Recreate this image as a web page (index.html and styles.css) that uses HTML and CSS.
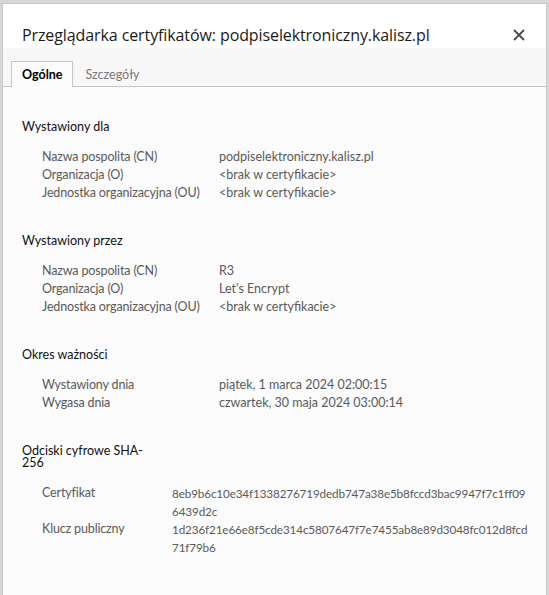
FILE: index.html
```html
<!DOCTYPE html>
<html lang="pl">
<head>
    <meta charset="UTF-8">
    <title>Przeglądarka certyfikatów</title>
    <link rel="stylesheet" href="styles.css">
</head>
<body>
    <div class="dialog">
        <div class="dialog-header">
            <h1 class="dialog-title">Przeglądarka certyfikatów: podpiselektroniczny.kalisz.pl</h1>
            <button class="close-btn" aria-label="Zamknij">
                <svg width="12" height="12" viewBox="0 0 12 12">
                    <path d="M1 1 L11 11 M11 1 L1 11" stroke="#4a4a4a" stroke-width="1.8" fill="none"/>
                </svg>
            </button>
        </div>
        <div class="tabs">
            <div class="tab active">Ogólne</div>
            <div class="tab">Szczegóły</div>
        </div>
        <div class="content">
            <div class="section">
                <div class="section-title">Wystawiony dla</div>
                <div class="fields">
                    <div class="label">Nazwa pospolita (CN)</div>
                    <div class="value">podpiselektroniczny.kalisz.pl</div>
                    <div class="label">Organizacja (O)</div>
                    <div class="value">&lt;brak w certyfikacie&gt;</div>
                    <div class="label">Jednostka organizacyjna (OU)</div>
                    <div class="value">&lt;brak w certyfikacie&gt;</div>
                </div>
            </div>
            <div class="section">
                <div class="section-title">Wystawiony przez</div>
                <div class="fields">
                    <div class="label">Nazwa pospolita (CN)</div>
                    <div class="value">R3</div>
                    <div class="label">Organizacja (O)</div>
                    <div class="value">Let's Encrypt</div>
                    <div class="label">Jednostka organizacyjna (OU)</div>
                    <div class="value">&lt;brak w certyfikacie&gt;</div>
                </div>
            </div>
            <div class="section">
                <div class="section-title">Okres ważności</div>
                <div class="fields">
                    <div class="label">Wystawiony dnia</div>
                    <div class="value">piątek, 1 marca 2024 02:00:15</div>
                    <div class="label">Wygasa dnia</div>
                    <div class="value">czwartek, 30 maja 2024 03:00:14</div>
                </div>
            </div>
            <div class="section">
                <div class="section-title">Odciski cyfrowe SHA-256</div>
                <div class="fields fingerprints">
                    <div class="label">Certyfikat</div>
                    <div class="value hash">8eb9b6c10e34f1338276719dedb747a38e5b8fccd3bac9947f7c1ff096439d2c</div>
                    <div class="label">Klucz publiczny</div>
                    <div class="value hash">1d236f21e66e8f5cde314c5807647f7e7455ab8e89d3048fc012d8fcd71f79b6</div>
                </div>
            </div>
        </div>
    </div>
</body>
</html>
```

FILE: styles.css
```css
* {
    box-sizing: border-box;
    margin: 0;
    padding: 0;
}

body {
    background: #d4d6d8;
    font-family: Lato, 'Open Sans', sans-serif;
    height: 595px;
    overflow: hidden;
    padding: 3px 2px 0 2px;
}

.dialog {
    width: 545px;
    height: 600px;
    background: #fbfbfb;
    border: 1px solid #c9c9c9;
    border-bottom: none;
}

.dialog-header {
    background: #fff;
    height: 44px;
    display: flex;
    align-items: center;
    justify-content: space-between;
    padding: 17px 20px 0 19px;
}

.dialog-title {
    font-family: 'Open Sans', sans-serif;
    font-size: 16px;
    font-weight: 400;
    color: #1a1a1a;
    letter-spacing: -0.1px;
}

.close-btn {
    background: none;
    border: none;
    width: 14px;
    height: 14px;
    display: flex;
    align-items: center;
    justify-content: center;
}

.tabs {
    background: #f7f7f7;
    height: 39px;
    display: flex;
    align-items: flex-end;
    padding-left: 8px;
    border-bottom: 1px solid #c6c6c6;
}

.tab {
    font-size: 12.5px;
    color: #777;
    height: 26px;
    padding: 0 11px;
    line-height: 25px;
    margin-bottom: -1px;
    border: 1px solid transparent;
    border-bottom: none;
}

.tab.active {
    color: #000;
    font-weight: 700;
    background: #fbfbfb;
    border-color: #c6c6c6;
    padding: 0 10px;
}

.content {
    padding: 34px 10px 0 19px;
    font-size: 12.5px;
}

.section {
    margin-bottom: 33px;
}

.section-title {
    color: #111;
    width: 128px;
    line-height: 12px;
    margin-bottom: 15px;
}

.fields {
    display: grid;
    grid-template-columns: 177px 1fr;
    padding-left: 20px;
    line-height: 18px;
    color: #5a5a5a;
}

.label {
    letter-spacing: -0.15px;
}

.fingerprints {
    grid-template-columns: 130px 360px;
}

.hash {
    word-break: break-all;
    font-size: 11.7px;
    letter-spacing: -0.12px;
}
```
